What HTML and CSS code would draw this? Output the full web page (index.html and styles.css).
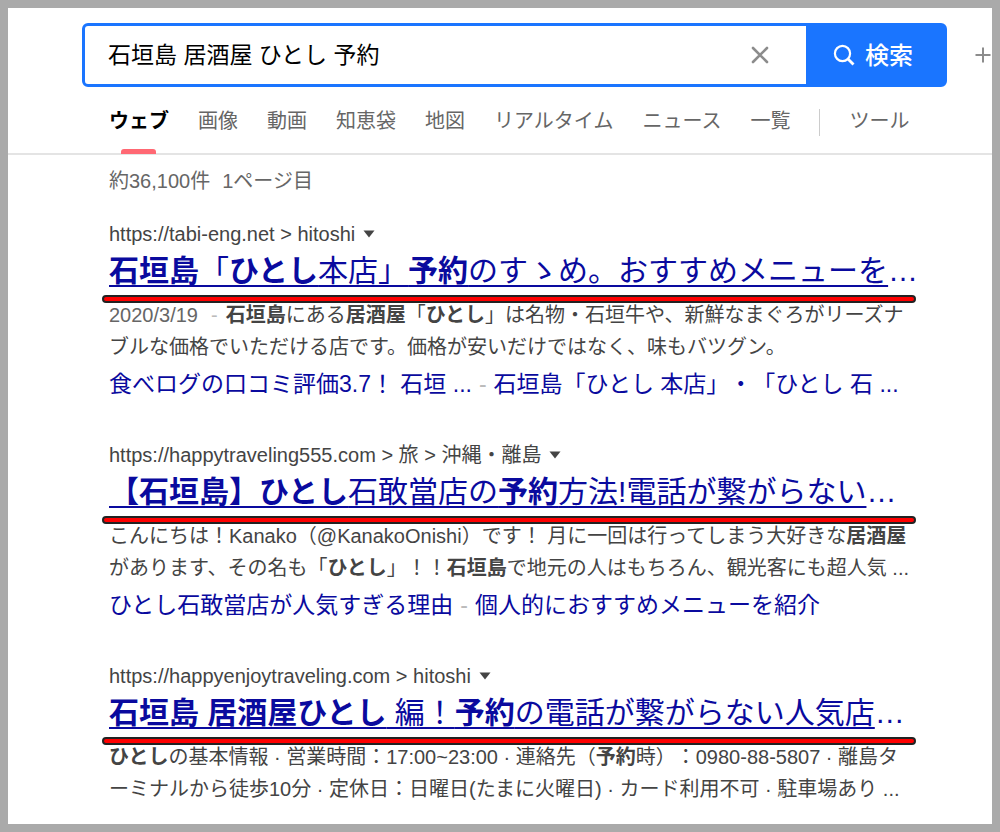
FILE: index.html
```
<!DOCTYPE html>
<html lang="ja">
<head>
    <meta charset="UTF-8">
    <meta name="viewport" content="width=device-width, initial-scale=1.0">
    <title>石垣島 居酒屋 ひとし 予約</title>
    <link rel="stylesheet" href="styles.css">
</head>
<body>
    <header class="header">
        <div class="search-row">
            <form class="search" onsubmit="return false">
                <input type="text" class="search-input" id="query" aria-label="検索キーワード" value="石垣島 居酒屋 ひとし 予約">
                <button type="button" class="clear" aria-label="クリア" onclick="document.getElementById('query').value = ''">
                    <svg width="18" height="18" viewBox="0 0 18 18"><path d="M2 2L16 16M16 2L2 16" stroke="#8c8c8c" stroke-width="2.6" stroke-linecap="round"/></svg>
                </button>
                <button type="submit" class="submit">
                    <svg width="22" height="22" viewBox="0 0 22 22" fill="none" stroke="#fff" stroke-width="2.2"><circle cx="9.5" cy="9.5" r="7.6"/><path d="M15 15L20.5 20.5" stroke-width="2.8"/></svg>
                    <span>検索</span>
                </button>
            </form>
            <button type="button" class="plus" aria-label="条件指定">
                <svg width="16" height="16" viewBox="0 0 16 16"><path d="M8 0.5V15.5M0.5 8H15.5" stroke="#8c8c8c" stroke-width="2"/></svg>
            </button>
        </div>
        <nav class="tabs">
            <a class="tab active" href="#">ウェブ</a>
            <a class="tab" href="#">画像</a>
            <a class="tab" href="#">動画</a>
            <a class="tab" href="#">知恵袋</a>
            <a class="tab" href="#">地図</a>
            <a class="tab" href="#">リアルタイム</a>
            <a class="tab" href="#">ニュース</a>
            <a class="tab" href="#">一覧</a>
            <span class="divider"></span>
            <a class="tab" href="#">ツール</a>
        </nav>
    </header>

    <main class="results">
        <p class="count"><span>約36,100件</span><span>1ページ目</span></p>

        <article class="result">
            <div class="url">https://tabi-eng.net &gt; hitoshi <svg class="arrow" viewBox="0 0 12 8"><path d="M0.5 0.5H11.5L6 7.5Z"/></svg></div>
            <h3 class="title"><a href="#"><b>石垣島</b>「<b>ひとし</b>本店」<b>予約</b>のすゝめ。おすすめメニューを</a>…</h3>
            <p class="desc"><span class="date">2020/3/19</span><span class="date-dash">-</span><b>石垣島</b>にある<b>居酒屋</b>「<b>ひとし</b>」は名物・石垣牛や、新鮮なまぐろがリーズナ<br>ブルな価格でいただける店です。価格が安いだけではなく、味もバツグン。</p>
            <p class="related"><a href="#">食べログの口コミ評価3.7！ 石垣 ...</a><span class="dash">-</span><a href="#">石垣島「ひとし 本店」・「ひとし 石 ...</a></p>
        </article>

        <article class="result">
            <div class="url">https://happytraveling555.com &gt; 旅 &gt; 沖縄・離島 <svg class="arrow" viewBox="0 0 12 8"><path d="M0.5 0.5H11.5L6 7.5Z"/></svg></div>
            <h3 class="title"><a href="#"><b>【石垣島】ひとし</b>石敢當店の<b>予約</b>方法!電話が繋がらない</a>…</h3>
            <p class="desc">こんにちは！Kanako（@KanakoOnishi）です！ 月に一回は行ってしまう大好きな<b>居酒屋</b><br>があります、その名も「<b>ひとし</b>」！！<b>石垣島</b>で地元の人はもちろん、観光客にも超人気 ...</p>
            <p class="related"><a href="#">ひとし石敢當店が人気すぎる理由</a><span class="dash">-</span><a href="#">個人的におすすめメニューを紹介</a></p>
        </article>

        <article class="result">
            <div class="url">https://happyenjoytraveling.com &gt; hitoshi <svg class="arrow" viewBox="0 0 12 8"><path d="M0.5 0.5H11.5L6 7.5Z"/></svg></div>
            <h3 class="title"><a href="#"><b>石垣島 居酒屋ひとし</b> 編！<b>予約</b>の電話が繋がらない人気店</a>…</h3>
            <p class="desc"><b>ひとし</b>の基本情報 · 営業時間：17:00~23:00 · 連絡先（<b>予約</b>時）：0980-88-5807 · 離島タ<br>ーミナルから徒歩10分 · 定休日：日曜日(たまに火曜日) · カード利用不可 · 駐車場あり ...</p>
        </article>
    </main>
</body>
</html>
```
FILE: styles.css
```
*, *::after {
    box-sizing: border-box;
}
body {
    margin: 0;
    min-height: 100vh;
    border: 8px solid #aaa;
    background: #fff;
    color: #444;
    font-family: "Liberation Sans", "Noto Sans CJK JP", sans-serif;
    font-size: 20px;
    text-spacing-trim: space-all;
}
p, h3 {
    margin: 0;
    font-weight: normal;
}
a {
    color: #0a0a9e;
    text-decoration: none;
}
button {
    border: none;
    background: none;
    padding: 0;
    font-family: inherit;
    cursor: pointer;
}
svg {
    display: block;
}

.header {
    border-bottom: 2px solid #e4e4e4;
}
.search-row {
    display: flex;
    align-items: center;
    gap: 28px;
    padding: 15px 0 0 74px;
}
.search {
    flex: 1;
    display: flex;
    height: 64px;
    border: 3px solid #1a75ff;
    border-radius: 6px;
    background: #fff;
}
.search-input {
    flex: 1;
    min-width: 0;
    border: none;
    outline: none;
    padding: 0 0 5px 23px;
    background: none;
    color: #000;
    font-family: inherit;
    font-size: 23px;
}
.clear {
    padding: 0 37px;
}
.submit {
    display: flex;
    align-items: center;
    justify-content: center;
    gap: 10px;
    width: 138px;
    padding-right: 4px;
    background: #1a75ff;
    color: #fff;
    font-size: 24px;
    font-weight: 500;
}
.submit span {
    padding-bottom: 4px;
}
.plus {
    width: 17px;
}

.tabs {
    display: flex;
    gap: 29px;
    height: 66px;
    padding-left: 101px;
    white-space: nowrap;
}
.tab {
    position: relative;
    line-height: 68px;
    height: 66px;
    color: #666;
}
.tab.active {
    color: #000;
    font-weight: bold;
}
.tab.active::after {
    content: "";
    position: absolute;
    left: 12px;
    bottom: -1px;
    width: 35px;
    height: 5px;
    border-radius: 3px 3px 0 0;
    background: #ff6873;
}
.divider {
    width: 1px;
    height: 27px;
    margin-top: 22px;
    background: #ccc;
}

.results {
    padding: 10px 68px 8px 101px;
}
.count {
    display: flex;
    gap: 12px;
    margin-bottom: 23px;
    line-height: 32px;
    color: #666;
}
.result {
    margin-bottom: 39px;
    white-space: nowrap;
}
.result:last-child {
    margin-bottom: 0;
}
.url {
    display: flex;
    align-items: center;
    gap: 8px;
    height: 28px;
    line-height: 28px;
}
.arrow {
    width: 12px;
    height: 8px;
    fill: #444;
}
.title {
    position: relative;
    height: 45px;
    margin-bottom: 6px;
    color: #0a0a9e;
    font-size: 30px;
    line-height: 45px;
}
.title a {
    text-decoration: underline;
    text-decoration-thickness: 2px;
    text-decoration-skip-ink: none;
    text-underline-offset: 4px;
}
/* red marker line under each title */
.title::after {
    content: "";
    position: absolute;
    left: -7px;
    right: 8px;
    bottom: -10px;
    height: 8px;
    border: 2px solid #222;
    border-radius: 4px;
    background: #f00;
}
.desc {
    line-height: 32px;
}
.date {
    color: #666;
}
.date-dash {
    margin: 0 8px 0 13px;
    color: #bbb;
}
.related {
    margin-top: 3px;
    font-size: 23px;
    line-height: 36px;
}
.dash {
    margin: 0 7px;
    color: #bbb;
}
```
